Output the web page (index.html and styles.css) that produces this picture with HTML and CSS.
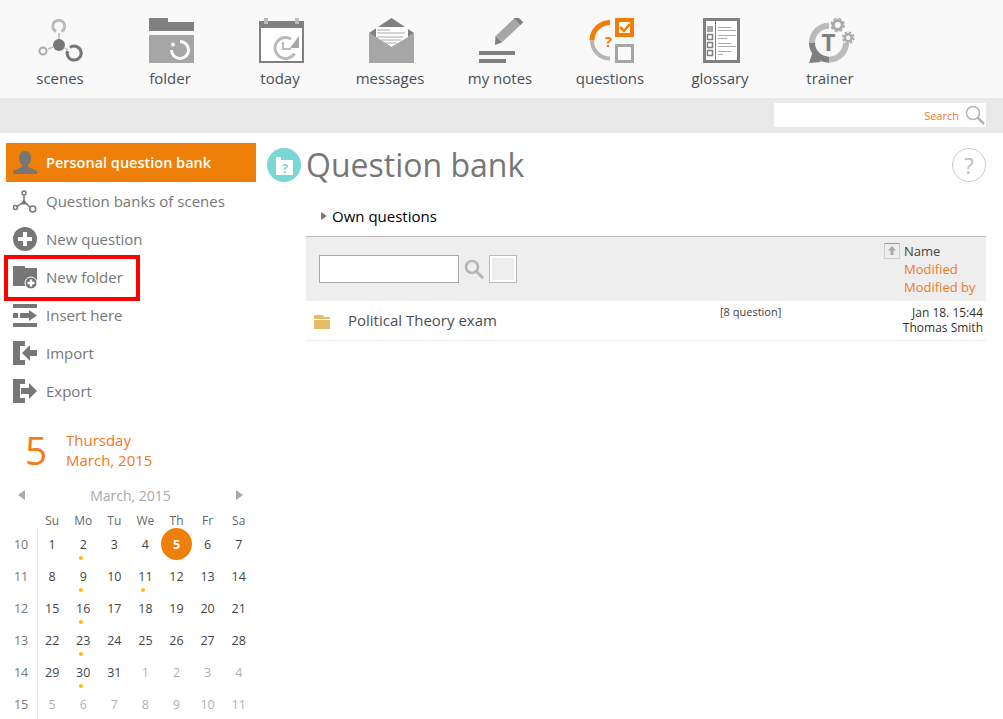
FILE: index.html
```html
<!DOCTYPE html>
<html lang="en">
<head>
  <meta charset="UTF-8">
  <title>Question bank</title>
  <link rel="stylesheet" href="styles.css">
</head>
<body>
  <nav class="topnav">
    <a class="nav-item">
      <svg viewBox="0 0 60 46" width="60" height="46">
        <path d="M29 15V21M23 29L18 31M35 30L38 32" stroke="#bbb" stroke-width="1.500" fill="none"/>
        <path d="M26 13.500A6 6 0 1 1 31.500 13.500" fill="none" stroke="#bbb" stroke-width="3"/>
        <circle cx="13" cy="33" r="3.500" fill="#f9f9f9" stroke="#aaa" stroke-width="2"/>
        <path d="M40 29.500A7 7 0 1 1 37.500 33" fill="none" stroke="#777" stroke-width="3"/>
        <circle cx="29" cy="27" r="6" fill="#777"/>
      </svg>
      <span>scenes</span>
    </a>
    <a class="nav-item">
      <svg viewBox="0 0 60 46" width="60" height="46">
        <path d="M9 0H28V4H54V13H9Z" fill="#808080"/>
        <rect x="9" y="17" width="45" height="28" fill="#a6a6a6"/>
        <path d="M40 23.500A8.500 8.500 0 1 1 31.500 32" fill="none" stroke="#fff" stroke-width="3"/>
        <circle cx="33" cy="26.500" r="2" fill="#fff"/>
      </svg>
      <span>folder</span>
    </a>
    <a class="nav-item">
      <svg viewBox="0 0 60 46" width="60" height="46">
        <rect x="9" y="3" width="45" height="42" fill="#808080"/>
        <rect x="11" y="10" width="41" height="33" fill="#fff"/>
        <rect x="14" y="0" width="4" height="6" fill="#bbb"/>
        <rect x="45" y="0" width="4" height="6" fill="#bbb"/>
        <path d="M41 21A10.500 10.500 0 1 0 44.500 35.500" fill="none" stroke="#bbb" stroke-width="3"/>
        <path d="M33 24V31H41" fill="none" stroke="#bbb" stroke-width="2"/>
        <path d="M49 18V30H40Z" fill="#a6a6a6"/>
      </svg>
      <span>today</span>
    </a>
    <a class="nav-item">
      <svg viewBox="0 0 60 46" width="60" height="46">
        <path d="M9 15L31.500 0L54 15L31.500 30Z" fill="#808080"/>
        <path d="M9 15L31.500 30L54 15V45H9Z" fill="#a6a6a6"/>
        <path d="M16 9H48V19L31.500 29L16 19Z" fill="#fff"/>
        <path d="M17 12H30M17 15H45M17 19H43M21 22H41M25 25H37" stroke="#aaa" stroke-width="1" fill="none"/>
      </svg>
      <span>messages</span>
    </a>
    <a class="nav-item">
      <svg viewBox="0 0 60 46" width="60" height="46">
        <rect x="9" y="33" width="36" height="4" fill="#808080"/>
        <rect x="9" y="41" width="27" height="4" fill="#808080"/>
        <path d="M29 21L47 4" stroke="#a6a6a6" stroke-width="9" fill="none"/>
        <path d="M47 4L50 1" stroke="#808080" stroke-width="9" fill="none"/>
        <path d="M25.500 17.500L32 24.500L25 27Z" fill="#808080"/>
      </svg>
      <span>my notes</span>
    </a>
    <a class="nav-item">
      <svg viewBox="0 0 60 46" width="60" height="46">
        <path d="M30 4.500A18 18 0 0 0 12 22.500" fill="none" stroke="#f57c00" stroke-width="5"/>
        <path d="M12 22.500A18 18 0 0 0 30 40.500" fill="none" stroke="#b5b5b5" stroke-width="4"/>
        <rect x="37" y="2" width="15" height="15" fill="#fff" stroke="#f57c00" stroke-width="4"/>
        <path d="M40 9L44 13L50 6" fill="none" stroke="#f57c00" stroke-width="2.500"/>
        <rect x="36.500" y="27.500" width="16" height="16" fill="#f9f9f9" stroke="#a6a6a6" stroke-width="3"/>
        <text x="28.500" y="29" class="icon-mark">?</text>
      </svg>
      <span>questions</span>
    </a>
    <a class="nav-item">
      <svg viewBox="0 0 60 46" width="60" height="46">
        <rect x="14.500" y="1.500" width="34" height="42" fill="#fff" stroke="#808080" stroke-width="3"/>
        <rect x="25" y="2" width="1" height="41" fill="#808080"/>
        <rect x="17" y="8" width="6" height="6" fill="#a6a6a6"/>
        <rect x="17.500" y="16.500" width="5" height="5" fill="#fff" stroke="#808080" stroke-width="1.500"/>
        <rect x="17.500" y="24.500" width="5" height="5" fill="#fff" stroke="#808080" stroke-width="1.500"/>
        <rect x="17.500" y="32.500" width="5" height="5" fill="#fff" stroke="#808080" stroke-width="1.500"/>
        <path d="M28 9.500H41M28 12.500H46M28 17.500H46M28 20.500H37M28 25.500H41M28 28.500H46M28 33.500H41M28 36.500H33" stroke="#aaa" stroke-width="1" fill="none"/>
      </svg>
      <span>glossary</span>
    </a>
    <a class="nav-item">
      <svg viewBox="0 0 60 46" width="60" height="46">
        <path d="M12 24.700A17 17 0 0 1 29 7.700" fill="none" stroke="#bbb" stroke-width="6"/>
        <path d="M46 24.700A17 17 0 0 1 29 41.700" fill="none" stroke="#bbb" stroke-width="6"/>
        <path d="M12 24.700A17 17 0 0 0 29 41.700" fill="none" stroke="#808080" stroke-width="6"/>
        <path d="M9 45L21 44L13 33Z" fill="#808080"/>
        <text x="28.500" y="33" class="icon-letter">T</text>
        <circle cx="37.700" cy="7" r="4.500" fill="#f9f9f9" stroke="#aaa" stroke-width="3"/>
        <circle cx="37.700" cy="7" r="6.500" fill="none" stroke="#aaa" stroke-width="1.500" stroke-dasharray="3 2.100"/>
        <circle cx="48.300" cy="19.700" r="3.500" fill="#f9f9f9" stroke="#aaa" stroke-width="2.500"/>
        <circle cx="48.300" cy="19.700" r="5.500" fill="none" stroke="#aaa" stroke-width="1.500" stroke-dasharray="2.500 1.800"/>
      </svg>
      <span>trainer</span>
    </a>
  </nav>

  <div class="searchbar">
    <div class="searchbox">
      <span>Search</span>
      <svg viewBox="0 0 20 20" width="20" height="20">
        <circle cx="8" cy="8" r="6.500" fill="none" stroke="#b5b5b5" stroke-width="1.500"/>
        <path d="M13 13L19 19" stroke="#b5b5b5" stroke-width="2.500"/>
      </svg>
    </div>
  </div>

  <div class="page">
    <aside class="sidebar">
      <ul class="menu">
        <li class="active">
          <svg viewBox="0 0 24 24" width="24" height="24">
            <path d="M12 1C16 1 18 4 18 8C18 11 16.500 14 15 15V17L24 21V24H0V21L9 17V15C7.500 14 6 11 6 8C6 4 8 1 12 1Z" fill="#777"/>
          </svg>
          Personal question bank
        </li>
        <li>
          <svg viewBox="0 0 24 24" width="24" height="24">
            <path d="M11 6V11M9 14L3.500 18M13 14L17.500 19" stroke="#777" stroke-width="1.500" fill="none"/>
            <circle cx="11" cy="4" r="2" fill="none" stroke="#777" stroke-width="1.500"/>
            <path d="M11 10L14.500 15.500H7.500Z" fill="#777"/>
            <circle cx="2.500" cy="18.500" r="2" fill="none" stroke="#777" stroke-width="1.500"/>
            <circle cx="19.700" cy="20" r="3" fill="none" stroke="#777" stroke-width="1.500"/>
          </svg>
          Question banks of scenes
        </li>
        <li>
          <svg viewBox="0 0 24 24" width="24" height="24">
            <circle cx="12" cy="12" r="12" fill="#777"/>
            <path d="M10 5H14V10H19V14H14V19H10V14H5V10H10Z" fill="#fff"/>
          </svg>
          New question
        </li>
        <li>
          <svg viewBox="0 0 24 24" width="24" height="24">
            <path d="M0 1H12V3H24V21H0Z" fill="#777"/>
            <circle cx="18" cy="18" r="6" fill="#777" stroke="#fff" stroke-width="1"/>
            <path d="M16.800 14.500H19.200V16.800H21.500V19.200H19.200V21.500H16.800V19.200H14.500V16.800H16.800Z" fill="#fff"/>
          </svg>
          New folder
        </li>
        <li>
          <svg viewBox="0 0 24 24" width="24" height="24">
            <rect x="0" y="1" width="24" height="4" fill="#777"/>
            <rect x="0" y="20" width="24" height="4" fill="#777"/>
            <rect x="0" y="10" width="5" height="5" fill="#777"/>
            <path d="M7 10H16V7L24 12.500L16 18V15H7Z" fill="#777"/>
          </svg>
          Insert here
        </li>
        <li>
          <svg viewBox="0 0 24 24" width="24" height="24">
            <path d="M0 0H12V5H7V19H12V24H0Z" fill="#777"/>
            <path d="M24 9H17V4L9 12L17 20V15H24Z" fill="#777"/>
          </svg>
          Import
        </li>
        <li>
          <svg viewBox="0 0 24 24" width="24" height="24">
            <path d="M0 0H12V5H7V19H12V24H0Z" fill="#777"/>
            <path d="M8 9H16V4L24 12L16 20V15H8Z" fill="#777"/>
          </svg>
          Export
        </li>
      </ul>

      <div class="today">
        <div class="today-num">5</div>
        <div class="today-text">Thursday<br>March, 2015</div>
      </div>

      <div class="cal-title">
        <span class="arrow-left"></span>
        <span>March, 2015</span>
        <span class="arrow-right"></span>
      </div>

      <div class="cal" id="cal"></div>
    </aside>

    <main class="content">
      <div class="title-row">
        <svg class="title-icon" viewBox="0 0 34 34" width="34" height="34">
          <circle cx="17" cy="17" r="17" fill="#7ad7d5"/>
          <path d="M9 9H14V12H26V27H9Z" fill="#fff"/>
          <text x="18" y="24.500" class="title-mark">?</text>
        </svg>
        <h1>Question bank</h1>
        <div class="help">?</div>
      </div>

      <div class="panel">
        <div class="own"><span class="tri"></span>Own questions</div>

        <div class="head">
          <input class="filter" type="text">
          <svg class="filter-go" viewBox="0 0 20 20" width="20" height="20">
            <circle cx="8" cy="8" r="6" fill="none" stroke="#b5b5b5" stroke-width="2.500"/>
            <path d="M12.500 12.500L19 19" stroke="#b5b5b5" stroke-width="3"/>
          </svg>
          <div class="square"></div>
          <div class="sort">
            <svg viewBox="0 0 16 16" width="16" height="16">
              <rect x="0.500" y="0.500" width="15" height="15" fill="none" stroke="#aaa" stroke-dasharray="1 1"/>
              <path d="M1 0.500H15" stroke="#999"/>
              <path d="M8 3L12 7.500H9.500V12H6.500V7.500H4Z" fill="#aaa"/>
            </svg>
            <div class="sort-labels">
              <div class="sort-on">Name</div>
              <div>Modified</div>
              <div>Modified by</div>
            </div>
          </div>
        </div>

        <div class="row">
          <svg class="row-folder" viewBox="0 0 16 14" width="16" height="14">
            <path d="M0 0H9L10 2H16V4H0Z" fill="#e5bd66"/>
            <rect x="0" y="5" width="16" height="9" fill="#e5bd66"/>
          </svg>
          <div class="row-name">Political Theory exam</div>
          <div class="row-count">[8 question]</div>
          <div class="row-meta">
            <div>Jan 18. 15:44</div>
            <div>Thomas Smith</div>
          </div>
        </div>
      </div>
    </main>
  </div>

  <div class="callout"></div>

  <script>
    const weeks = [
      [10, 1, 2, 3, 4, 5, 6, 7],
      [11, 8, 9, 10, 11, 12, 13, 14],
      [12, 15, 16, 17, 18, 19, 20, 21],
      [13, 22, 23, 24, 25, 26, 27, 28],
      [14, 29, 30, 31, 1, 2, 3, 4],
      [15, 5, 6, 7, 8, 9, 10, 11]
    ];
    const marked = [2, 9, 11, 16, 23, 30];
    const cal = document.getElementById('cal');

    ['', 'Su', 'Mo', 'Tu', 'We', 'Th', 'Fr', 'Sa'].forEach(name => {
      const div = document.createElement('div');
      div.className = 'cal-day-name';
      div.textContent = name;
      cal.appendChild(div);
    });

    weeks.forEach((week, w) => {
      week.forEach((num, i) => {
        const div = document.createElement('div');
        const span = document.createElement('span');
        span.textContent = num;
        div.appendChild(span);
        const other = (w === 4 && i > 3) || w === 5;
        if (i === 0) div.className = 'cal-week';
        else if (other) div.className = 'cal-cell other';
        else div.className = 'cal-cell';
        if (i > 0 && !other && num === 5) div.classList.add('now');
        if (i > 0 && !other && marked.includes(num)) div.classList.add('dot');
        cal.appendChild(div);
      });
    });
  </script>
</body>
</html>
```

FILE: styles.css
```css
html, body { margin: 0; height: 719px; overflow: hidden; }
body { font-family: "Open Sans", "DejaVu Sans", sans-serif; background: #fff; color: #777; position: relative; }

.topnav { display: flex; height: 98px; padding-left: 5px; background: #f9f9f9; box-sizing: border-box; }
.nav-item { width: 110px; display: flex; flex-direction: column; align-items: center; padding-top: 18px; color: #4a4f57; font-size: 15px; line-height: 20px; }
.nav-item span { margin-top: 4px; }
.icon-mark { font-size: 15px; font-weight: 700; fill: #f57c00; text-anchor: middle; }
.icon-letter { font-size: 24px; font-weight: 700; fill: #808080; text-anchor: middle; }

.searchbar { height: 35px; background: #e9e9e9; display: flex; justify-content: flex-end; padding: 5px 17px 0 0; box-sizing: border-box; }
.searchbox { width: 212px; height: 24px; background: #fff; display: flex; align-items: center; justify-content: flex-end; gap: 6px; padding-right: 1px; box-sizing: border-box; color: #f07a28; font-size: 11px; }

.page { display: flex; }
.sidebar { width: 261px; flex: none; padding-top: 10px; box-sizing: border-box; }
.menu { list-style: none; margin: 0 5px 0 6px; padding: 0; }
.menu li { height: 38px; display: flex; align-items: center; gap: 9px; padding-left: 7px; font-size: 15px; color: #777; }
.menu li.active { height: 39px; background: #ee7f09; color: #fff; font-weight: 600; font-size: 14.500px; padding-bottom: 1px; box-sizing: border-box; }

.today { display: flex; margin: 20px 0 0 25px; }
.today-num { width: 41px; font-size: 39px; line-height: 40px; color: #f57c14; }
.today-text { font-size: 15px; line-height: 20px; color: #ee7a20; }

.cal-title { display: flex; align-items: center; justify-content: space-between; width: 225px; margin: 15px 0 0 18px; height: 20px; font-size: 14px; color: #aaa; }
.arrow-left { border: 5px solid transparent; border-left: 0; border-right: 7px solid #aaa; }
.arrow-right { border: 5px solid transparent; border-right: 0; border-left: 7px solid #aaa; }

.cal { display: grid; grid-template-columns: repeat(8, 31.1px); grid-template-rows: 18px; grid-auto-rows: 32px; margin: 5px 0 0 5.500px; font-size: 12.500px; color: #444; }
.cal-day-name { text-align: center; line-height: 22px; font-size: 12px; color: #666; }
.cal-week { display: flex; align-items: center; justify-content: center; margin-right: -1px; color: #777; border-right: 1px solid #e5e5e5; }
.cal-cell { display: flex; align-items: center; justify-content: center; position: relative; }
.cal-cell.other { color: #b0b0b0; }
.cal-cell.now span { width: 32px; height: 32px; border-radius: 50%; background: #ee7f09; color: #fff; font-weight: 700; display: flex; align-items: center; justify-content: center; }
.cal-cell.dot::after { content: ""; position: absolute; left: 11px; bottom: 0; width: 4px; height: 4px; border-radius: 50%; background: #fdb813; }

.content { flex: 1; padding: 15px 17px 0 6px; min-width: 0; }
.title-row { display: flex; align-items: center; height: 34px; }
.title-mark { font-size: 12px; font-weight: 700; fill: #7ad7d5; text-anchor: middle; }
h1 { margin: 0 0 0 5px; font-size: 32px; line-height: 34px; font-weight: 400; color: #777; }
.help { margin-left: auto; width: 32px; height: 32px; border: 1px solid #ccc; border-radius: 50%; text-align: center; line-height: 32px; font-size: 22px; color: #bbb; }

.panel { margin-left: 39px; }
.own { display: flex; align-items: center; margin-top: 19px; height: 30px; margin-bottom: 5px; padding-left: 15px; font-size: 15px; color: #000; }
.tri { border: 4px solid transparent; border-right: 0; border-left: 6px solid #777; margin-right: 5px; }

.head { display: flex; align-items: flex-start; height: 65px; background: #eee; border-top: 1px solid #bbb; box-sizing: border-box; padding-left: 13px; }
.filter { width: 140px; height: 28px; margin: 18px 0 0; padding: 0; border: 1px solid #aaa; background: #fff; box-sizing: border-box; }
.filter-go { margin: 22px 0 0 5px; }
.square { width: 28px; height: 28px; margin: 18px 0 0 5px; border: 1px solid #bbb; outline: 2px solid #fff; outline-offset: -3px; box-sizing: border-box; background: #eee; }
.sort { margin-left: auto; width: 102px; display: flex; gap: 4px; padding-top: 5px; font-size: 13px; line-height: 18px; color: #f07a28; }
.sort svg { flex: none; margin-top: 1px; }
.sort-on { color: #444; }

.row { display: flex; height: 40px; border-bottom: 1px solid #eee; box-sizing: border-box; }
.row-folder { flex: none; margin: 14px 18px 0 8px; }
.row-name { width: 372px; flex: none; font-size: 15px; line-height: 38px; color: #4a4f57; }
.row-count { flex: 1; padding-top: 3px; font-size: 11px; line-height: 15px; color: #444; }
.row-meta { padding: 4px 3px 0 0; text-align: right; font-size: 12px; line-height: 15px; color: #333; }

.callout { position: absolute; left: 4px; top: 255px; width: 136px; height: 46px; border: 4px solid #f00; box-sizing: border-box; }
```
